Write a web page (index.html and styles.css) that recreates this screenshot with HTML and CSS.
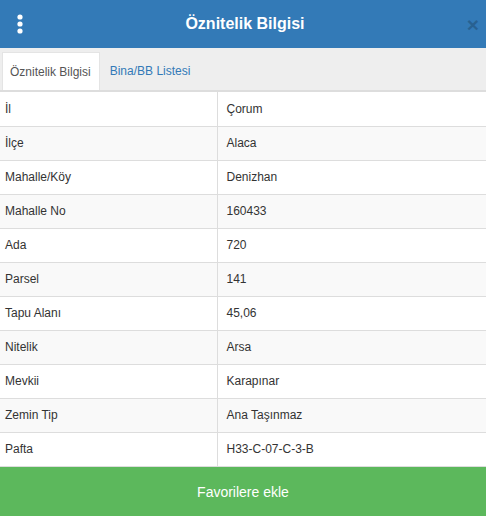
FILE: index.html
```html
<!DOCTYPE html>
<html lang="tr">
<head>
<meta charset="utf-8">
<title>Öznitelik Bilgisi</title>
<link rel="stylesheet" href="styles.css">
</head>
<body>
<div class="panel">
  <header class="header">
    <div class="menu">
      <svg width="10" height="22" viewBox="0 0 10 22" aria-hidden="true">
        <circle cx="5" cy="3" r="2.6" fill="#fff"/>
        <circle cx="5" cy="10" r="2.6" fill="#fff"/>
        <circle cx="5" cy="17" r="2.6" fill="#fff"/>
      </svg>
    </div>
    <h1 class="title">Öznitelik Bilgisi</h1>
    <div class="close">×</div>
  </header>
  <nav class="tabs">
    <span class="tab active">Öznitelik Bilgisi</span>
    <span class="tab">Bina/BB Listesi</span>
  </nav>
  <table class="attrs">
    <tbody>
      <tr><td class="key">İl</td><td class="val">Çorum</td></tr>
      <tr><td class="key">İlçe</td><td class="val">Alaca</td></tr>
      <tr><td class="key">Mahalle/Köy</td><td class="val">Denizhan</td></tr>
      <tr><td class="key">Mahalle No</td><td class="val">160433</td></tr>
      <tr><td class="key">Ada</td><td class="val">720</td></tr>
      <tr><td class="key">Parsel</td><td class="val">141</td></tr>
      <tr><td class="key">Tapu Alanı</td><td class="val">45,06</td></tr>
      <tr><td class="key">Nitelik</td><td class="val">Arsa</td></tr>
      <tr><td class="key">Mevkii</td><td class="val">Karapınar</td></tr>
      <tr><td class="key">Zemin Tip</td><td class="val">Ana Taşınmaz</td></tr>
      <tr><td class="key">Pafta</td><td class="val">H33-C-07-C-3-B</td></tr>
    </tbody>
  </table>
  <button class="fav">Favorilere ekle</button>
</div>
</body>
</html>
```

FILE: styles.css
```css
* { box-sizing: border-box; }
html, body { margin: 0; padding: 0; background: #fff; }
body {
  font-family: "Liberation Sans", Arial, sans-serif;
  font-size: 12px;
  color: #333;
}
.panel { width: 486px; display: flex; flex-direction: column; }
.header {
  height: 48px;
  background: #337ab7;
  display: grid;
  grid-template-columns: 40px 1fr 40px;
  align-items: center;
}
.menu { display: flex; justify-content: center; padding-top: 1px; }
.menu svg { display: block; }
.title {
  margin: 0;
  text-align: center;
  color: #fff;
  font-size: 16px;
  font-weight: bold;
  padding-left: 4px;
}
.close {
  color: #000;
  opacity: 0.2;
  font-size: 21px;
  font-weight: bold;
  line-height: 1;
  text-align: right;
  padding-right: 7px;
  padding-top: 1px;
}
.tabs {
  height: 44px;
  background: #eee;
  padding: 4px 0 0 2px;
  display: flex;
  border-bottom: 2px solid #ddd;
}
.tab {
  height: 38px;
  padding: 0 9px 0 10px;
  display: flex;
  align-items: center;
  color: #337ab7;
}
.tab.active {
  background: #fff;
  color: #555;
  border: 1px solid #e4e4e4;
  border-bottom: none;
  padding: 0 8px 0 7px;
}
.attrs {
  width: 100%;
  border-collapse: collapse;
  table-layout: fixed;
}
.attrs td {
  height: 34px;
  padding: 1px 0 0 0;
  line-height: 17px;
  border-bottom: 1px solid #ddd;
  vertical-align: middle;
}
.attrs tr:nth-child(even) td { background: #f9f9f9; }
.attrs .key { width: 217px; padding-left: 5px; border-right: 1px solid #ddd; }
.attrs .val { padding-left: 9px; }
.fav {
  height: 50px;
  border: none;
  margin: 0;
  background: #5cb85c;
  color: #fff;
  font-family: "Liberation Sans", Arial, sans-serif;
  font-size: 14px;
  width: 100%;
  padding-top: 2px;
}
```
